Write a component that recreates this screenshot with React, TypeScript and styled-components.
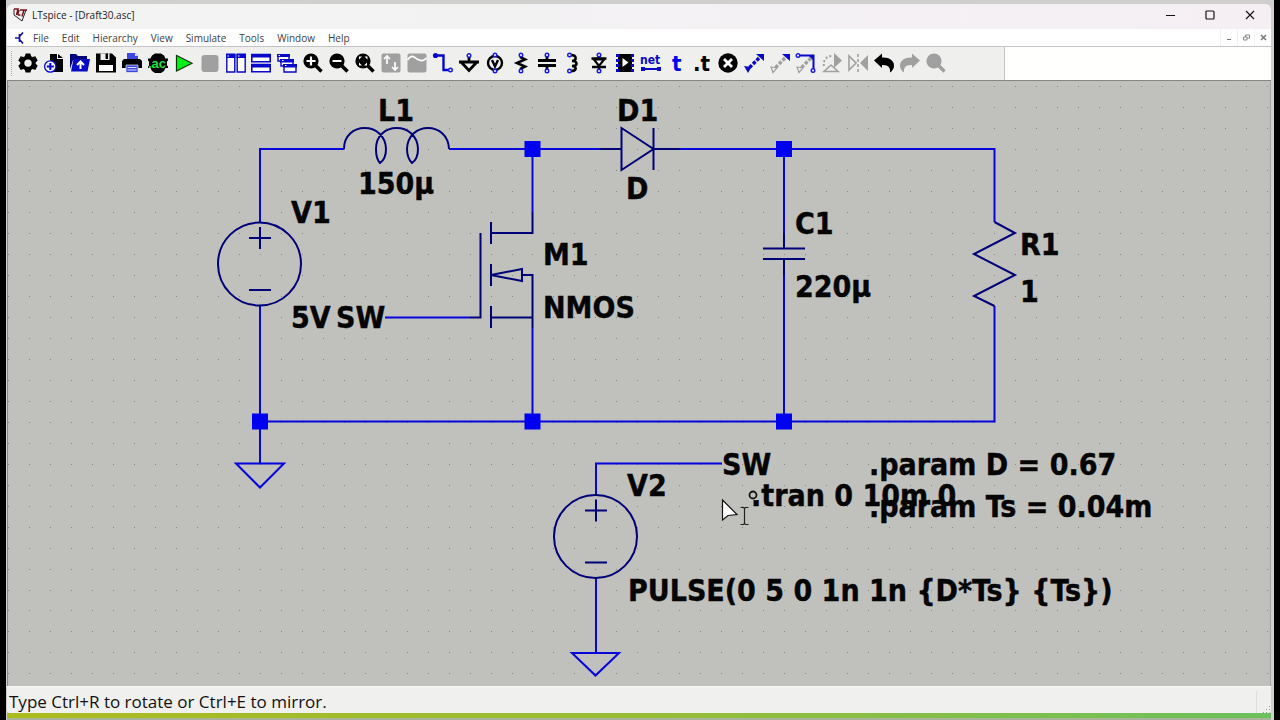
import React from 'react';
import styled, { createGlobalStyle } from 'styled-components';

const BLUE = '#0808c8';
const GREY = '#a0a0a0';

const GlobalStyle = createGlobalStyle`
  * { box-sizing: border-box; }
  body { margin: 0; background: #000; }
`;

const Desktop = styled.div`
  min-height: 100vh;
  display: flex;
  flex-direction: column;
  margin: 0 6px;
  padding: 4px 3px 0 1px;
  background: #cfcfcd;
  font-family: 'Open Sans', 'Noto Sans', sans-serif;
`;

const AppWindow = styled.main`
  flex: 1;
  display: flex;
  flex-direction: column;
  border-radius: 6px 6px 4px 4px;
  overflow: hidden;
  background: #f0f0ee;
`;

const TitleBar = styled.header`
  height: 25px;
  display: flex;
  align-items: center;
  padding: 0 1px 3px 6px;
  background: linear-gradient(90deg, #f3f3f3, #f3f2f3 40%, #f5eff4);
  color: #1a1a1a;
`;

const Title = styled.h1`
  margin: 0;
  padding-left: 4px;
  flex: 1;
  font-size: 10px;
  line-height: 16px;
  font-weight: 400;
`;

const CaptionButton = styled.button`
  width: 40px;
  height: 22px;
  padding: 0;
  border: 0;
  background: transparent;
  display: grid;
  place-items: center;
`;

const MenuBar = styled.nav`
  height: 18px;
  display: flex;
  align-items: center;
  padding-left: 6px;
  background: #fff;
  border-bottom: 1px solid #c4c4c4;
`;

const MenuItems = styled.div`
  flex: 1;
  display: flex;
  align-items: center;
  gap: 13px;
  margin-left: 7px;
`;

const MenuItem = styled.button`
  padding: 0;
  border: 0;
  background: transparent;
  color: #404040;
  font: 400 10px/16px 'Open Sans', 'Noto Sans', sans-serif;
`;

const ChildButton = styled.button`
  width: 17px;
  height: 17px;
  padding: 0;
  border: 0;
  border-left: 1px solid #f2f2f2;
  background: transparent;
  display: grid;
  place-items: center;
`;

const ToolStrip = styled.div`
  height: 34px;
  display: flex;
  background: #fffffd;
  border-bottom: 1px solid #858585;
`;

const ToolBar = styled.div`
  width: 998px;
  padding-left: 4px;
  display: flex;
  gap: 3px;
  background: #efefed;
  border-right: 1px solid #c6c6c4;
`;

const Grip = styled.span`
  width: 1px;
  margin: 4px 0;
  border-left: 1px dotted #aaa;
`;

const Tools = styled.div`
  width: 934px;
  display: grid;
  grid-template-columns: repeat(36, 1fr);
`;

const ToolButton = styled.button`
  padding: 0 0 2px;
  border: 0;
  background: transparent;
  display: grid;
  place-items: center;
`;

const Sheet = styled.section`
  flex: 1;
  display: flex;
  min-height: 605px;
  background: #c0c1bc;
  border-left: 1px solid #8c8c8c;
  border-right: 1px solid #a4a4a4;
`;

const Drawing = styled.svg`
  flex: 1;
  width: 100%;
  display: block;

  text {
    font: 700 30px 'DejaVu Sans Condensed', 'DejaVu Sans', sans-serif;
    fill: #050505;
    stroke: #050505;
    stroke-width: 0.4px;
  }
`;

const StatusBar = styled.footer`
  height: 27px;
  display: flex;
  align-items: center;
  justify-content: space-between;
  padding: 4px 0 0 2px;
  background: #f0f0ee;
  border-top: 1px solid #fafafa;
  color: #111;
  font-size: 17px;
  line-height: 20px;
  font-weight: 500;
`;

const SizeGrip = styled.span`
  align-self: stretch;
  width: 15px;
  border-left: 1px solid #dedede;
  display: flex;
  align-items: flex-end;
  justify-content: flex-end;
`;

const DesktopEdge = styled.div`
  height: 7px;
  background: linear-gradient(90deg, #adbb1f, #97bd35 50%, #6cc05c);
  border-bottom: 2px solid #a7b39a;
`;

const magnifier = (
  <>
    <circle cx="8" cy="8" r="7.6" fill="#000" />
    <path d="M12 12l6.5 6.5" stroke="#000" strokeWidth="3.6" />
  </>
);

const pin = (x: number, y: number) => (
  <circle cx={x} cy={y} r="1.8" fill="#efefed" stroke="#1818e0" strokeWidth="1.4" />
);

const hollowTail = <path d="M1 14l6 1-4 4.5z" fill="none" stroke={GREY} strokeWidth="1.2" />;

const diagonal = (color: string) => (
  <path d="M5.5 14.5L15 5" stroke={color} strokeWidth="3.4" strokeDasharray="3.4 1.6" />
);

const tools: [string, React.ReactNode][] = [
  ['Settings', <path fill="#000" fillRule="evenodd" d="M7.6 .6h4.8l.7 2.6 1.5.9 2.7-.8 2.4 4.1-2 2v1.4l2 2-2.4 4.1-2.7-.8-1.5.9-.7 2.6H7.6l-.7-2.6-1.5-.9-2.7.8L.3 12.8l2-2V9.4l-2-2 2.4-4.1 2.7.8 1.5-.9zM10 6.4a3.7 3.7 0 1 0 0 7.4a3.7 3.7 0 0 0 0-7.4z" />],
  ['New schematic', <>
    <path d="M6 1h7v5h6v13H6z" fill="#000" /><path d="M14 1l5 4h-5z" fill="#000" />
    <circle cx="6.3" cy="13.5" r="5.7" fill="#f4f4ff" stroke={BLUE} strokeWidth="1.3" />
    <path d="M6.3 10v7M2.8 13.5h7" stroke={BLUE} strokeWidth="2" />
  </>],
  ['Open', <>
    <path d="M0 1h6l2 2h9v4H3l-3 9z" fill="#000078" />
    <path d="M3.5 6H20l-2.5 12.5H1z" fill={BLUE} />
    <path d="M10.5 16V9M7 12l3.5-3.5L14 12" fill="none" stroke="#fff" strokeWidth="2" />
  </>],
  ['Save', <>
    <path d="M0 .5h16l4 4v15H0z" fill="#000" />
    <path d="M4.5 .5h9V7h-9z" fill="#efefed" /><path d="M9.5 .5H12V6H9.5z" fill="#000" />
    <path d="M3 12h14v6H3z" fill="#fff" />
  </>],
  ['Print', <>
    <path d="M5 0h8l3 3v4H5z" fill="#3c48e4" /><path d="M13 0l3 3h-3z" fill="#dde" />
    <path d="M2 6h16l2 2v7H0V8z" fill="#000" />
    <path d="M4 12h12v7.5H4z" fill="#3c48e4" stroke="#efefed" strokeWidth=".7" />
    <path d="M5.5 14.5h9M5.5 17h9" stroke="#efefed" strokeWidth=".9" />
  </>],
  ['AC analysis', <>
    <path d="M7 .5h6l3 2 1.5 3H20v2l-1 1v4l1 1V15h-2.500L16 18l-3 2H7l-3-2-1.500-3H0v-1.500l1-1v-4l-1-1v-2h2.500L4 2.500z" fill="#000" />
    <text x="0" y="14.5" fontSize="13" fontWeight="700" fill="#26e23a" fontFamily="Liberation Sans, sans-serif">.ac</text>
  </>],
  ['Run', <path d="M2.5 2.5V18L18 10.2z" fill="#08ee18" stroke="#063806" strokeWidth="1.2" />],
  ['Stop', <rect x="1.5" y="2" width="17" height="17" rx="3" fill={GREY} />],
  ['Tile vertically', <>
    <path d="M.8 2h8v17h-8zM11.2 2h8v17h-8z" fill="#fff" stroke={BLUE} strokeWidth="1.4" />
    <path d="M0 .5h9.500V5H0zM10.500 .5H20V5h-9.500z" fill={BLUE} /><path d="M1.500 3H3M12 3h1.500" stroke="#fff" />
  </>],
  ['Tile horizontally', <>
    <path d="M.8 1.5h18.4v7.2H.8zM.8 11.5h18.4v7.2H.8z" fill="#fff" stroke={BLUE} strokeWidth="1.6" />
    <path d="M.5 1h19v3.5H.5zM.5 11h19v3.5H.5z" fill={BLUE} />
  </>],
  ['Cascade', <>
    <path d="M1 2h11v6H1zM4 7h12v6H4zM7 12h12v7H7z" fill="#fff" stroke={BLUE} strokeWidth="1.4" />
    <path d="M0 1h13v3H0zM3 6h14v3.5H3zM6 11h14v3.5H6z" fill={BLUE} />
    <path d="M1.5 2.5H3M5 7.5h1.5M8 12.5h1.5" stroke="#fff" />
  </>],
  ['Zoom in', <>{magnifier}<path d="M8 3.5v9M3.5 8h9" stroke="#fff" strokeWidth="2.2" /></>],
  ['Zoom out', <>{magnifier}<path d="M3.5 8h9" stroke="#fff" strokeWidth="2.2" /></>],
  ['Zoom to fit', <>{magnifier}<path d="M7 3.5H4v3zM9 12.5h3v-3zM9.5 3.5h3v3zM4 9.5v3h3z" fill="#fff" /></>],
  ['Autorange', <>
    <rect x=".5" y=".5" width="19" height="19" rx="2" fill={GREY} />
    <path d="M6 11V3M3 6l3-3 3 3M14 9v8M11 14l3 3 3-3" fill="none" stroke="#fff" strokeWidth="1.7" />
  </>],
  ['Plot settings', <>
    <rect x=".5" y=".5" width="19" height="19" rx="2" fill={GREY} />
    <path d="M.5 7C5 1 7 4 10 6s6 3 9.5-1" fill="none" stroke="#fff" strokeWidth="1.7" />
  </>],
  ['Wire', <>
    <path d="M2 2.5h8.5V17H17" fill="none" stroke={BLUE} strokeWidth="2.4" />
    <circle cx="2.5" cy="2.5" r="2.6" fill={BLUE} />{pin(17.5, 17)}
  </>],
  ['Ground', <>
    <path d="M10 3v6M0 9h20M2.5 9.5L10 17.5l7.500-8" fill="none" stroke="#000" strokeWidth="2.8" />{pin(10, 2.5)}
  </>],
  ['Voltage source', <>
    <circle cx="10" cy="10" r="7" fill="none" stroke="#000" strokeWidth="2.4" />
    <path d="M7 7l3 6.500L13 7" fill="none" stroke="#000" strokeWidth="2.4" />{pin(10, 2)}{pin(10, 18)}
  </>],
  ['Resistor', <>
    <path d="M10 3v1.5l4 2-8 3.5 8 3.5-4 2V17" fill="none" stroke="#000" strokeWidth="2.6" />{pin(10, 2)}{pin(10, 18)}
  </>],
  ['Capacitor', <>
    <path d="M10 3v4M10 13v4M1 7.5h18M1 12.5h18" stroke="#000" strokeWidth="2.8" />{pin(10, 2)}{pin(10, 18)}
  </>],
  ['Inductor', <>
    <path d="M8 2c6 0 6 6 1 6c6 0 6 5 0 5c5 0 5 5-1 5" fill="none" stroke="#000" strokeWidth="2.6" />{pin(6.5, 2)}{pin(6.5, 18)}
  </>],
  ['Diode', <>
    <path d="M10 2v3M10 13v4M2.5 5.5h15M3 14h14" stroke="#000" strokeWidth="2.5" />
    <path d="M5 6.5h10L10 13z" fill="#fff" stroke="#000" strokeWidth="2.2" />{pin(10, 2)}{pin(10, 18)}
  </>],
  ['Component', <>
    <path d="M3 1h14v18H3z" fill="#000" />
    <path d="M2.5 1v18M17.5 1v18" stroke={BLUE} strokeWidth="3" strokeDasharray="3 2" />
    <path d="M7.5 5v9l6-4.5z" fill="#fff" />
  </>],
  ['Label net', <>
    <text x="-1" y="11" fontSize="12" fontWeight="700" fill={BLUE} fontFamily="DejaVu Sans Condensed, sans-serif">net</text>
    <path d="M2 16h16" stroke={BLUE} strokeWidth="2" /><path d="M0 14h4v4H0zM16 14h4v4h-4z" fill={BLUE} />
  </>],
  ['Text', <text x="5" y="18" fontSize="22" fontWeight="700" fill="#0000f0" fontFamily="DejaVu Sans Condensed, sans-serif">t</text>],
  ['SPICE directive', <text x="0" y="18" fontSize="22" fontWeight="700" fontFamily="DejaVu Sans Condensed, sans-serif">.t</text>],
  ['Delete', <>
    <circle cx="10" cy="10" r="9.7" fill="#000" /><path d="M6 6l8 8M14 6l-8 8" stroke="#fff" strokeWidth="2.8" />
  </>],
  ['Move', <>{diagonal(BLUE)}<path d="M12 1h8v7zM0 13l7.5 1L4 20z" fill={BLUE} /></>],
  ['Duplicate', <>{diagonal(GREY)}<path d="M12 1h8v7z" fill={BLUE} />{hollowTail}</>],
  ['Drag', <>
    {diagonal(GREY)}
    <path d="M3 2.5h14.5V17" fill="none" stroke={BLUE} strokeWidth="2" />
    <path d="M12 2h6v6z" fill={BLUE} />{pin(2, 2.5)}{pin(17, 17.5)}{hollowTail}
  </>],
  ['Rotate', <>
    <path d="M2 13A8 8 0 0 1 11 3" fill="none" stroke={GREY} strokeWidth="2" strokeDasharray="2 2" />
    <path d="M12 0l8 7.5-8 7.5z" fill={GREY} />
    <path d="M2 18.5h14L9 12z" fill="none" stroke={GREY} strokeWidth="1.6" />
  </>],
  ['Mirror', <>
    <path d="M1 3v14l7-7z" fill="none" stroke={GREY} strokeWidth="1.6" />
    <path d="M20 2v16l-8-8z" fill={GREY} /><path d="M10 1v18" stroke={GREY} strokeWidth="1.6" strokeDasharray="3 2" />
  </>],
  ['Undo', <path d="M0 7.5L8 .5v4c7-.5 12 3 12 8 0 3-1.5 5.5-4 7 .8-5-2-8-8-7.5v3z" fill="#000" />],
  ['Redo', <path d="M20 7.5L12 .5v4C5 4 0 7.5 0 12.5c0 3 1.5 5.5 4 7-.8-5 2-8 8-7.5v3z" fill={GREY} />],
  ['Find', <>
    <circle cx="8" cy="8" r="7.6" fill={GREY} /><path d="M12 12l6.5 6.5" stroke={GREY} strokeWidth="3.6" />
  </>],
];

/* Grid dots: 48 steps across a 1007px tile, rounded to whole pixels. */
const steps = Array.from({ length: 48 }, (_, i) => Math.round((i * 1007) / 48));
const gridDots = steps.map((y) => steps.map((x) => `M${x} ${y}h1v1h-1z`).join('')).join('');

const labels: [number, number, string][] = [
  [378, 121, 'L1'], [358, 194, '150µ'], [291, 223, 'V1'], [291, 328, '5V'], [336, 328, 'SW'],
  [543, 265, 'M1'], [543, 318, 'NMOS'], [617, 121, 'D1'], [626, 199, 'D'],
  [795, 234, 'C1'], [795, 297, '220µ'], [1020, 255, 'R1'], [1020, 302, '1'],
  [722, 475, 'SW'], [627, 496, 'V2'], [751, 506, '.tran 0 10m 0'],
  [869, 475, '.param D = 0.67'], [869, 517, '.param Ts = 0.04m'],
  [628, 601, 'PULSE(0 5 0 1n 1n {D*Ts} {Ts})'],
];

const junctions = [[532.5, 149], [784, 149], [260, 421.5], [532.5, 421.5], [784, 421.5]];

const Source = ({ x, y }: { x: number; y: number }) => (
  <g>
    <circle cx={x - 0.5} cy={y} r="41.5" />
    <path d={`M${x} ${y - 37}v22M${x - 11} ${y - 26}h22M${x - 11} ${y + 26}h22`} />
  </g>
);

const Schematic = () => (
  <Drawing role="img" aria-label="Boost converter schematic">
    <defs>
      <pattern id="grid" patternUnits="userSpaceOnUse" x="8" y="86" width="1007" height="1007">
        <path d={gridDots} fill="#868782" />
      </pattern>
    </defs>
    <g transform="translate(-8 -81)">
      <rect x="8" y="81" width="100%" height="100%" fill="url(#grid)" />
      <g fill="none" stroke="#0505dc" strokeWidth="2">
        <path d="M260 222V149H344M449 149H600M532.5 149V212M680 149H994.5V222M784 149V233M784 275V421.5M994.5 306V421.5H260M260 306V463M532.5 328V421.5M385 317.5H470M596 495V463.5H722M596 578V653" />
        <path d="M236 463.5H284L260 487.5zM572 653H619L595.5 675.5z" />
      </g>
      <g fill="none" stroke="#000078" strokeWidth="2">
        <Source x={260} y={264} />
        <Source x={596} y={536.5} />
        <path d="M344 149C344 121 385 121 386 149C386 156 383 161 380 163C377 160 376 155 376 149C376 121 417 121 418 149C418 156 415 161 412 163C409 160 407 155 407 149C408 121 448 121 449 149" />
        <path d="M600 149H621.5M621.5 128V170L653.5 149zM653.5 128V170M653.5 149H680" />
        <path d="M470 317.5H480.5V233M491 222V244M491 264V286M491 306V328M491 233H532.5V212M491 317.5H532.5M491 275L522 269V281zM522 275H532.5V328" />
        <path d="M784 233V248.5M763 248.5H805M763 259H805M784 259V275" />
        <path d="M994.5 222L1015 233L974 254L1015 275L974 296L994.5 306" />
      </g>
      {junctions.map(([x, y]) => (
        <rect key={`${x}-${y}`} x={x - 8} y={y - 8} width="16" height="16" fill="#0000f0" />
      ))}
      {labels.map(([x, y, label]) => (
        <text key={`${x}-${y}`} x={x} y={y}>{label}</text>
      ))}
      <circle cx="753" cy="495" r="3.5" fill="none" stroke="#111" strokeWidth="1.8" />
      <path d="M722.5 500V520L728 515.5L737 514.5z" fill="#fff" stroke="#111" strokeWidth="1.2" />
      <path d="M740.5 507.5h3l1 1 1-1h3M744.5 508.5v15M740.5 524.5h3l1-1 1 1h3" fill="none" stroke="#222" strokeWidth="1.2" />
    </g>
  </Drawing>
);

export default function App() {
  return (
    <>
      <GlobalStyle />
      <Desktop>
        <AppWindow>
          <TitleBar>
            <svg width="15" height="15" viewBox="0 0 15 15" fill="none" aria-hidden="true">
              <path d="M1 1v6l8 6 4-11" stroke="#222" />
              <path d="M1 1h4L3.5 7M5 7h2.5M7 2h7M11 2L9 8.5M6 2L4.5 7" stroke="#7c1018" strokeWidth="1.5" />
            </svg>
            <Title>LTspice - [Draft30.asc]</Title>
            <CaptionButton aria-label="Minimize">
              <svg width="10" height="10"><path d="M1 5.5h9" stroke="#111" /></svg>
            </CaptionButton>
            <CaptionButton aria-label="Maximize">
              <svg width="10" height="10"><rect x="1" y="1" width="8" height="8" rx="1" fill="none" stroke="#111" strokeWidth="1.2" /></svg>
            </CaptionButton>
            <CaptionButton aria-label="Close">
              <svg width="10" height="10"><path d="M1 1l8 8M9 1l-8 8" stroke="#111" strokeWidth="1.1" /></svg>
            </CaptionButton>
          </TitleBar>
          <MenuBar>
            <svg width="13" height="14" viewBox="0 0 13 14" fill="none" aria-hidden="true">
              <path d="M2 7h4M6.5 3v8M7 5l3-3.5M7 9l3 3.5" stroke="#1414a8" strokeWidth="1.7" />
            </svg>
            <MenuItems>
              {['File', 'Edit', 'Hierarchy', 'View', 'Simulate', 'Tools', 'Window', 'Help'].map((item) => (
                <MenuItem key={item}>{item}</MenuItem>
              ))}
            </MenuItems>
            <ChildButton aria-label="Minimize sheet">
              <svg width="7" height="7"><path d="M1 5.5h4" stroke="#777" /></svg>
            </ChildButton>
            <ChildButton aria-label="Restore sheet">
              <svg width="7" height="7" fill="none" stroke="#888"><path d="M.5 3H4v3H.5zM2.5 3V1h4v3H4" /></svg>
            </ChildButton>
            <ChildButton aria-label="Close sheet">
              <svg width="7" height="7"><path d="M1 1l5 5M6 1L1 6" stroke="#777" strokeWidth="1.5" /></svg>
            </ChildButton>
          </MenuBar>
          <ToolStrip>
            <ToolBar role="toolbar">
              <Grip />
              <Tools>
                {tools.map(([name, icon]) => (
                  <ToolButton key={name} aria-label={name}>
                    <svg width="20" height="20" viewBox="0 0 20 20" overflow="visible">{icon}</svg>
                  </ToolButton>
                ))}
              </Tools>
            </ToolBar>
          </ToolStrip>
          <Sheet>
            <Schematic />
          </Sheet>
          <StatusBar>
            Type Ctrl+R to rotate or Ctrl+E to mirror.
            <SizeGrip>
              <svg width="8" height="8" aria-hidden="true"><path d="M6 1h1v1H6zM6 4h1v1H6zM3 4h1v1H3zM6 7h1v1H6zM3 7h1v1H3zM0 7h1v1H0z" fill="#999" /></svg>
            </SizeGrip>
          </StatusBar>
        </AppWindow>
        <DesktopEdge />
      </Desktop>
    </>
  );
}
